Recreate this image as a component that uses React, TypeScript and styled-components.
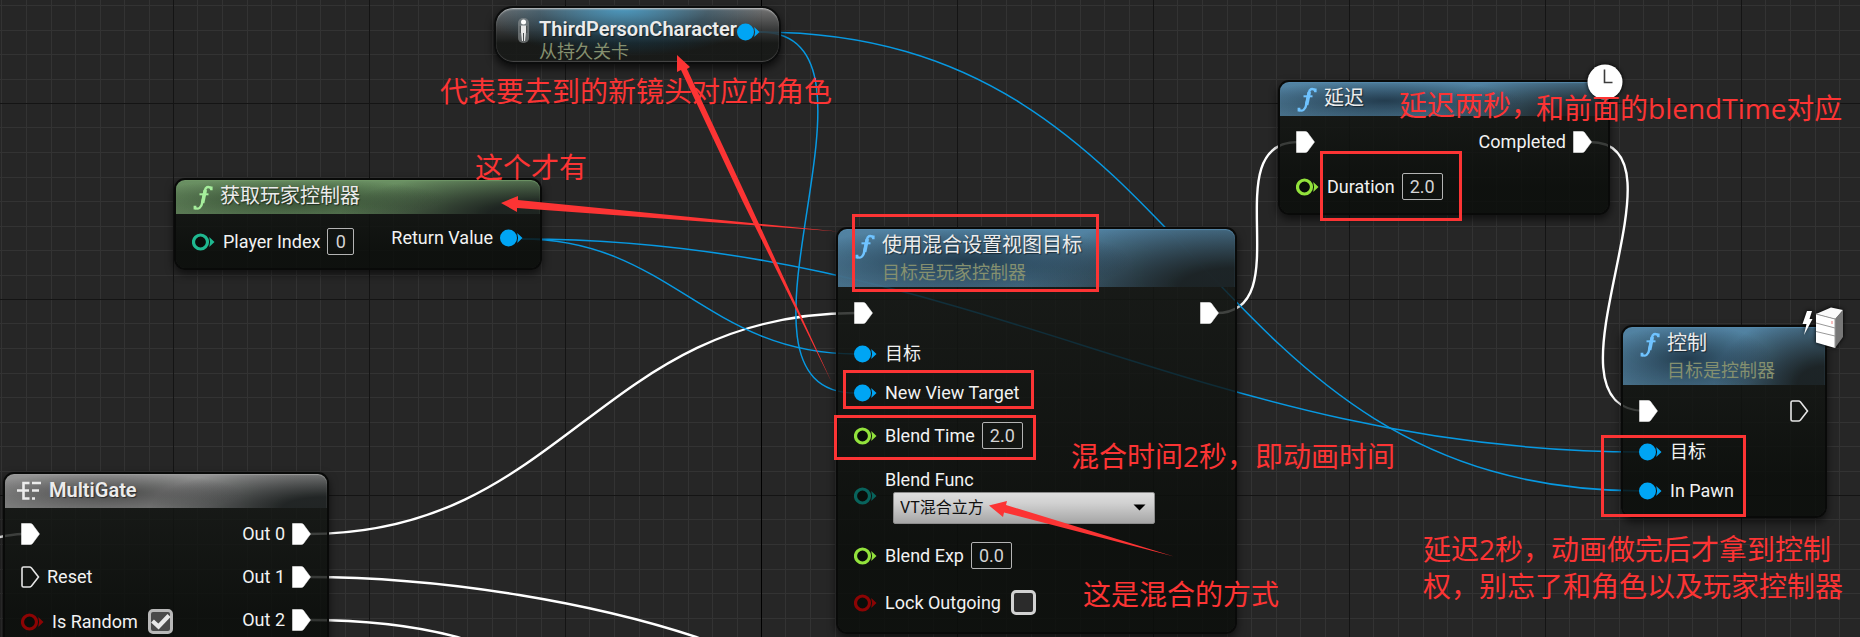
import React from "react";
import styled, { createGlobalStyle, css } from "styled-components";

const GlobalStyle = createGlobalStyle`
  *, *::before, *::after { box-sizing: border-box; }
  body { margin: 0; background: #262626; }
`;

const minorLines = [24, 49, 74, 98, 123, 147, 172];
const minorAxis = (angle: string) =>
  `linear-gradient(${angle}, ${[
    ...minorLines.map((at) => `transparent 0 ${at}px, #333 0 ${at + 1}px`),
    "transparent 0",
  ].join(", ")})`;
const majorAxis = (angle: string) => `linear-gradient(${angle}, #141414 0 1px, transparent 0)`;

const Canvas = styled.main`
  position: relative;
  min-height: 100vh;
  overflow: hidden;
  background-color: #262626;
  background-image: ${majorAxis("90deg")}, ${majorAxis("180deg")}, ${minorAxis("90deg")}, ${minorAxis("180deg")};
  background-size: 196px 196px;
  background-position: 173px 103px;
  font-family: Roboto, "Noto Sans CJK SC", sans-serif;
  font-size: 18px;
  line-height: 24px;
  color: #f2f2f2;
`;

const Layer = styled.svg`
  position: absolute;
  inset: 0;
  width: 100%;
  height: 100%;
  pointer-events: none;
`;

type Place = { $x: number; $y: number; $w: number };
const place = css<Place>`
  position: absolute;
  left: ${(p) => p.$x}px;
  top: ${(p) => p.$y}px;
  width: ${(p) => p.$w}px;
`;

const NodeBox = styled.section<Place>`
  ${place}
  border: 2px solid #090a09;
  border-radius: 11px;
  background: linear-gradient(rgba(22, 25, 22, 0.8), rgba(10, 13, 10, 0.84) 80%);
  background-clip: padding-box;
  box-shadow: 0 4px 9px rgba(0, 0, 0, 0.6);
`;

const tones = {
  blue: { lit: "86, 138, 172", dark: "20, 38, 52", icon: "#6fc3ff" },
  green: { lit: "112, 152, 104", dark: "32, 52, 32", icon: "#a6ee9c" },
  grey: { lit: "156, 156, 156", dark: "50, 50, 50", icon: "#e8e8e8" },
};
type Tone = keyof typeof tones;

const Header = styled.header<{ $tone: Tone }>`
  display: flex;
  gap: 7px;
  min-height: 34px;
  padding: 2px 11px 0 ${(p) => (p.$tone === "grey" ? 12 : 17)}px;
  border-radius: 9px 9px 0 0;
  background:
    radial-gradient(ellipse 42% 60% at 32% 55%, rgba(${(p) => tones[p.$tone].dark}, 0.72), transparent),
    radial-gradient(ellipse 55% 130% at 100% 100%, rgba(24, 28, 28, 0.9) 25%, transparent),
    linear-gradient(rgba(${(p) => tones[p.$tone].lit}, 0.95), rgba(${(p) => tones[p.$tone].lit}, 0.75));
  box-shadow: inset 0 1px 1px rgba(${(p) => tones[p.$tone].lit}, 0.9);
`;

const Title = styled.h2<{ $bold?: boolean }>`
  margin: 0;
  font-size: 20px;
  line-height: 28px;
  font-weight: ${(p) => (p.$bold ? 600 : 400)};
  color: #ececec;
  text-shadow: 1px 1px 1px rgba(0, 0, 0, 0.5);
`;

const Subtitle = styled.p<{ $tight?: boolean }>`
  margin: 0;
  font-size: 18px;
  line-height: ${(p) => (p.$tight ? 18 : 28)}px;
  color: #85906f;
`;

const Body = styled.div<{ $end: number }>`
  display: flex;
  justify-content: space-between;
  padding: 4px 16px ${(p) => p.$end}px;
`;

const Pins = styled.div<{ $right?: boolean }>`
  display: flex;
  flex-direction: column;
  align-items: ${(p) => (p.$right ? "flex-end" : "flex-start")};
`;

const rowHeights = { capsule: 33, exec: 43, object: 39, value: 47, menu: 73 };
const Row = styled.div<{ $kind: keyof typeof rowHeights }>`
  display: flex;
  align-items: center;
  gap: 7px;
  height: ${(p) => rowHeights[p.$kind]}px;
  white-space: nowrap;
`;

const ValueInput = styled.input<{ $short?: boolean }>`
  width: ${(p) => (p.$short ? 27 : 41)}px;
  height: 27px;
  padding: 0;
  border: 1px solid #b4b4b4;
  border-radius: 2px;
  background: transparent;
  color: #d4d4d4;
  font: inherit;
  text-align: center;
`;

const CheckWrap = styled.span`
  display: grid;
  margin-left: 3px;
  & > * { grid-area: 1 / 1; }
  & > svg { pointer-events: none; }
`;

const CheckInput = styled.input`
  appearance: none;
  width: 25px;
  height: 25px;
  margin: 0;
  border: 3px solid #d2d2d2;
  border-radius: 5px;
  background: #2b2b2b;
  &:checked { border-color: #b8b8b8; background: #4a4a4a; }
`;

const MenuField = styled.div`
  display: flex;
  flex-direction: column;
`;

const SelectWrap = styled.span`
  display: grid;
  align-items: center;
  width: 262px;
  margin-left: 8px;
  & > * { grid-area: 1 / 1; }
  & > svg { justify-self: end; margin-right: 9px; pointer-events: none; }
`;

const Select = styled.select`
  appearance: none;
  height: 32px;
  padding: 0 6px;
  border: 1px solid #8c8c8c;
  border-radius: 2px;
  background: linear-gradient(#dedede, #d0d0d0 35%, #a6a6a6);
  color: #101010;
  font: inherit;
  font-size: 16px;
`;

const Capsule = styled.section<Place>`
  ${place}
  display: flex;
  align-items: flex-start;
  height: 58px;
  padding: 7px 16px 0 20px;
  border: 2px solid #0c0d0d;
  border-radius: 19px;
  background:
    radial-gradient(ellipse 50% 90% at 45% 0, rgba(70, 160, 205, 0.85), rgba(24, 80, 110, 0.4) 60%, transparent),
    linear-gradient(rgba(125, 125, 125, 0.9), rgba(50, 52, 52, 0.85) 45%, rgba(22, 24, 22, 0.85) 65%);
  box-shadow: inset 0 2px 2px -1px #c8c8c8, inset 0 -1px 1px #4a4a4a, 0 4px 8px rgba(0, 0, 0, 0.7);
`;

const CapsuleText = styled.div`
  width: 206px;
  padding-left: 8px;
`;

const Badge = styled.span<Place>`
  ${place}
  line-height: 0;
  filter: drop-shadow(0 0 2px #000);
`;

const Note = styled.p<Place>`
  ${place}
  margin: 0;
  font-family: "Open Sans", "Noto Sans CJK SC", sans-serif;
  font-size: 28px;
  line-height: 37px;
  color: #fc3434;
`;

const Frame = styled.div<Place & { $h: number }>`
  ${place}
  height: ${(p) => p.$h}px;
  border: 3px solid #fc3434;
  pointer-events: none;
`;

const FunctionIcon = ({ tone }: { tone: Tone }) => (
  <svg width="20" height="32" viewBox="0 0 20 32" fill="none" stroke={tones[tone].icon} aria-hidden="true">
    <path d="M18.5 6.5C15 3.5 12.5 5 11.6 9.5L9.3 20.5C8.5 25.5 5.5 28 1.5 25.8" strokeWidth="2.4" />
    <path d="M12.3 8L9.6 21" strokeWidth="3.6" />
    <path d="M6.5 12.3H15.5" strokeWidth="2" />
    <path d="M16.4 4.6H19.6V8.2H17.2ZM.6 23.8H3.4L3.2 27.4H.6Z" fill={tones[tone].icon} stroke="none" />
  </svg>
);

const GateIcon = () => (
  <svg width="25" height="30" viewBox="0 0 25 30" fill="none" stroke="#ececec" strokeWidth="2.6" aria-hidden="true">
    <path d="M0 14.500H12M12.500 7H6.500V22.500H12.500M15 7H24M15 14.500H22M15 22.500H18" />
  </svg>
);

const ExecPin = ({ open }: { open?: boolean }) => (
  <svg width="19" height="22" viewBox="0 0 19 22" aria-hidden="true">
    <path
      d={open ? "M1 2.500Q1 1 2.500 1H8.500Q9.500 1 10.500 2L17.500 11L10.500 20Q9.500 21 8.500 21H2.500Q1 21 1 19.500Z" : "M.5.5H9.500Q10.500.5 11.500 1.500L18.500 11L11.500 20.500Q10.500 21.500 9.500 21.500H.5Z"}
      fill={open ? "none" : "#fff"}
      stroke={open ? "#e6e6e6" : "#fff"}
      strokeWidth={open ? 1.6 : 0.5}
    />
  </svg>
);

const DataPin = ({ color, linked }: { color: string; linked?: boolean }) => (
  <svg width="24" height="18" viewBox="0 0 24 18" aria-hidden="true">
    {linked ? (
      <circle cx="8.500" cy="9" r="8.500" fill={color} />
    ) : (
      <circle cx="8.500" cy="9" r="7" fill="#090d0a" stroke={color} strokeWidth="3.200" />
    )}
    <path d="M17.200 4L22.500 9L17.200 14Q19 9 17.200 4Z" fill={color} />
  </svg>
);

const blue = "#00a5f4";
const lime = "#92e23c";

const ValueField = ({ id, label, value, color, short }: { id: string; label: string; value: string; color: string; short?: boolean }) => (
  <Row $kind="value">
    <DataPin color={color} />
    <label htmlFor={id}>{label}</label>
    <ValueInput id={id} defaultValue={value} $short={short} />
  </Row>
);

const CheckField = ({ id, label, checked }: { id: string; label: string; checked?: boolean }) => (
  <Row $kind="value">
    <DataPin color="#8c0404" />
    <label htmlFor={id}>{label}</label>
    <CheckWrap>
      <CheckInput type="checkbox" id={id} defaultChecked={checked} />
      {checked && (
        <svg width="25" height="25" viewBox="0 0 25 25" fill="none" stroke="#e8e8e8" strokeWidth="4.200" aria-hidden="true">
          <path d="M4.500 12L10.500 17.500L21 6.500" />
        </svg>
      )}
    </CheckWrap>
  </Row>
);

const ObjectIn = ({ label }: { label: string }) => (
  <Row $kind="object">
    <DataPin color={blue} linked />
    <span>{label}</span>
  </Row>
);

const ExecIn = ({ label, open }: { label?: string; open?: boolean }) => (
  <Row $kind="exec">
    <ExecPin open={open} />
    {label && <span>{label}</span>}
  </Row>
);

const ExecOut = ({ label, open }: { label?: string; open?: boolean }) => (
  <Row $kind="exec">
    {label && <span>{label}</span>}
    <ExecPin open={open} />
  </Row>
);

const execWires = [
  "M-30 541C-10 541 0 535 22 534",
  "M308 534C563 534 599 313 856 313",
  "M308 577C450 577 600 605 696 637L790 671",
  "M308 620C370 620 420 627 457 637L540 662",
  "M1216 313C1301 313 1213 142 1298 142",
  "M1590 142C1697 142 1530 411 1646 411",
];
const objectWires = [
  "M759 32C911 32 702 393 856 393",
  "M759 32C1206 32 1187 491 1643 491",
  "M522 239C670 239 706 354 856 354",
  "M522 239C968 239 1199 452 1643 452",
];
const arrows = [
  "M677 55L690 67L687 69L748 200L832 383L742 200L681 70L677 72Z",
  "M501 203L518 196V200L838 231.500L517 208V212Z",
  "M989 505.500L1007 501L1006 505L1174 556.500L1004 512.500L1003 517Z",
];

export default function App() {
  return (
    <>
      <GlobalStyle />
      <Canvas>
        <Layer fill="none" aria-hidden="true">
          <path d="M761.500 0V2000" stroke="#000" />
          {execWires.map((d) => <path key={d} d={d} stroke="#fff" strokeWidth="2.400" />)}
          {objectWires.map((d) => <path key={d} d={d} stroke="#0799e2" strokeWidth="1.500" />)}
        </Layer>

        <Capsule $x={494} $y={6} $w={287}>
          <svg width="15" height="30" viewBox="0 0 15 30" aria-hidden="true">
            <rect x="2" y="3" width="11" height="25" rx="5" fill="#8f9496" opacity=".6" />
            <circle cx="7.500" cy="7" r="2.500" fill="#fff" />
            <path d="M5 10.500H10V17L9 26H6L5 17Z" fill="#e8e8e8" />
            <path d="M4.300 11V18M10.700 11V18M7.500 18V26" stroke="#454a4c" />
          </svg>
          <CapsuleText>
            <Title $bold>ThirdPersonCharacter</Title>
            <Subtitle $tight>从持久关卡</Subtitle>
          </CapsuleText>
          <Row $kind="capsule"><DataPin color={blue} linked /></Row>
        </Capsule>

        <NodeBox $x={174} $y={178} $w={368}>
          <Header $tone="green">
            <FunctionIcon tone="green" />
            <Title>获取玩家控制器</Title>
          </Header>
          <Body $end={3}>
            <Pins><ValueField id="player-index" label="Player Index" value="0" color="#1fb890" short /></Pins>
            <Pins $right>
              <Row $kind="object"><span>Return Value</span><DataPin color={blue} linked /></Row>
            </Pins>
          </Body>
        </NodeBox>

        <NodeBox $x={3} $y={472} $w={326}>
          <Header $tone="grey">
            <GateIcon />
            <Title $bold>MultiGate</Title>
          </Header>
          <Body $end={6}>
            <Pins>
              <ExecIn />
              <ExecIn label="Reset" open />
              <CheckField id="is-random" label="Is Random" checked />
            </Pins>
            <Pins $right>
              <ExecOut label="Out 0" />
              <ExecOut label="Out 1" />
              <ExecOut label="Out 2" />
            </Pins>
          </Body>
        </NodeBox>

        <NodeBox $x={836} $y={227} $w={401}>
          <Header $tone="blue">
            <FunctionIcon tone="blue" />
            <div>
              <Title>使用混合设置视图目标</Title>
              <Subtitle>目标是玩家控制器</Subtitle>
            </div>
          </Header>
          <Body $end={6}>
            <Pins>
              <ExecIn />
              <ObjectIn label="目标" />
              <ObjectIn label="New View Target" />
              <ValueField id="blend-time" label="Blend Time" value="2.0" color={lime} />
              <Row $kind="menu">
                <DataPin color="#08635c" />
                <MenuField>
                  <label htmlFor="blend-func">Blend Func</label>
                  <SelectWrap>
                    <Select id="blend-func"><option>VT混合立方</option></Select>
                    <svg width="13" height="7" viewBox="0 0 13 7" aria-hidden="true"><path d="M.5.5H12.500L6.500 6.500Z" fill="#000" /></svg>
                  </SelectWrap>
                </MenuField>
              </Row>
              <ValueField id="blend-exp" label="Blend Exp" value="0.0" color={lime} />
              <CheckField id="lock-outgoing" label="Lock Outgoing" />
            </Pins>
            <Pins $right><ExecOut /></Pins>
          </Body>
        </NodeBox>

        <NodeBox $x={1278} $y={80} $w={332}>
          <Header $tone="blue">
            <FunctionIcon tone="blue" />
            <Title>延迟</Title>
          </Header>
          <Body $end={3}>
            <Pins>
              <ExecIn />
              <ValueField id="duration" label="Duration" value="2.0" color={lime} />
            </Pins>
            <Pins $right><ExecOut label="Completed" /></Pins>
          </Body>
        </NodeBox>
        <Badge $x={1587} $y={64} $w={36}>
          <svg width="36" height="36" viewBox="0 0 36 36" aria-hidden="true">
            <circle cx="18" cy="18" r="17.500" fill="#fff" />
            <path d="M17.500 5.500V18.500H25.500" fill="none" stroke="#3c3c3c" strokeWidth="1.600" />
          </svg>
        </Badge>

        <NodeBox $x={1621} $y={325} $w={206}>
          <Header $tone="blue">
            <FunctionIcon tone="blue" />
            <div>
              <Title>控制</Title>
              <Subtitle>目标是控制器</Subtitle>
            </div>
          </Header>
          <Body $end={6}>
            <Pins>
              <ExecIn />
              <ObjectIn label="目标" />
              <ObjectIn label="In Pawn" />
            </Pins>
            <Pins $right><ExecOut open /></Pins>
          </Body>
        </NodeBox>
        <Badge $x={1801} $y={306} $w={44}>
          <svg width="44" height="44" viewBox="0 0 44 44" aria-hidden="true">
            <path d="M6 5H11L8.500 13H11.500L3 29L5.500 18H1.500Z" fill="#fff" />
            <path d="M15 8L30 1.500L42 4L34.500 13Z" fill="#fafafa" />
            <path d="M15 8L34 13V42L15 36.500Z" fill="#fff" />
            <path d="M34 13L42 4V31L34 42Z" fill="#777" />
            <path d="M15 8L34 13V42M15 17L34 22M15 25.500L34 30" fill="none" stroke="#999" />
            <path d="M31 15V18" stroke="#f08080" />
          </svg>
        </Badge>

        <Note $x={440} $y={73} $w={420}>代表要去到的新镜头对应的角色</Note>
        <Note $x={475} $y={149} $w={140}>这个才有</Note>
        <Note $x={1399} $y={87} $w={150}>延迟两秒，</Note>
        <Note $x={1536} $y={90} $w={324}>和前面的blendTime对应</Note>
        <Note $x={1071} $y={438} $w={350}>混合时间2秒，即动画时间</Note>
        <Note $x={1083} $y={576} $w={220}>这是混合的方式</Note>
        <Note $x={1423} $y={531} $w={430}>延迟2秒，动画做完后才拿到控制权，别忘了和角色以及玩家控制器</Note>

        <Frame $x={852} $y={214} $w={247} $h={78} />
        <Frame $x={843} $y={370} $w={191} $h={39} />
        <Frame $x={834} $y={415} $w={202} $h={45} />
        <Frame $x={1320} $y={151} $w={142} $h={70} />
        <Frame $x={1601} $y={435} $w={145} $h={82} />
        <Layer fill="#fc3434" aria-hidden="true">
          {arrows.map((d) => <path key={d} d={d} />)}
        </Layer>
      </Canvas>
    </>
  );
}
